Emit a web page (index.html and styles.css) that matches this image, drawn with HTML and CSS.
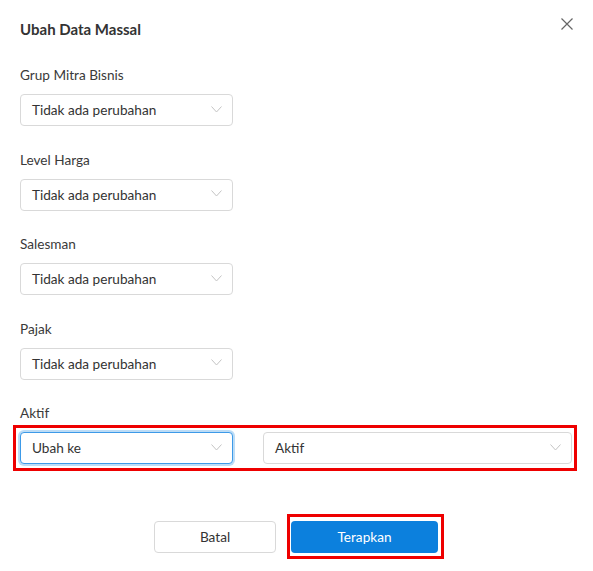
FILE: index.html
```html
<!DOCTYPE html>
<html>
<head>
<meta charset="utf-8">
<link rel="stylesheet" href="styles.css">
</head>
<body>
<div class="modal">
  <div class="header">
    <h1 class="title">Ubah Data Massal</h1>
    <button class="close" aria-label="Tutup">
      <svg width="12" height="12" viewBox="0 0 12 12"><path d="M0.5 0.5L11.5 11.5M11.5 0.5L0.5 11.5" stroke="#666" stroke-width="1.2" fill="none"/></svg>
    </button>
  </div>

  <div class="field">
    <div class="label">Grup Mitra Bisnis</div>
    <div class="select"><span>Tidak ada perubahan</span><svg class="chev" width="11" height="7" viewBox="0 0 11 7"><path d="M0.5 0.5L5.5 6L10.5 0.5" stroke="#c4c4c4" fill="none"/></svg></div>
  </div>
  <div class="field">
    <div class="label">Level Harga</div>
    <div class="select"><span>Tidak ada perubahan</span><svg class="chev" width="11" height="7" viewBox="0 0 11 7"><path d="M0.5 0.5L5.5 6L10.5 0.5" stroke="#c4c4c4" fill="none"/></svg></div>
  </div>
  <div class="field">
    <div class="label">Salesman</div>
    <div class="select"><span>Tidak ada perubahan</span><svg class="chev" width="11" height="7" viewBox="0 0 11 7"><path d="M0.5 0.5L5.5 6L10.5 0.5" stroke="#c4c4c4" fill="none"/></svg></div>
  </div>
  <div class="field">
    <div class="label">Pajak</div>
    <div class="select"><span>Tidak ada perubahan</span><svg class="chev" width="11" height="7" viewBox="0 0 11 7"><path d="M0.5 0.5L5.5 6L10.5 0.5" stroke="#c4c4c4" fill="none"/></svg></div>
  </div>
  <div class="field last">
    <div class="label">Aktif</div>
    <div class="highlight row">
      <div class="select focused"><span>Ubah ke</span><svg class="chev" width="11" height="7" viewBox="0 0 11 7"><path d="M0.5 0.5L5.5 6L10.5 0.5" stroke="#c4c4c4" fill="none"/></svg></div>
      <div class="select wide"><span>Aktif</span><svg class="chev" width="11" height="7" viewBox="0 0 11 7"><path d="M0.5 0.5L5.5 6L10.5 0.5" stroke="#c4c4c4" fill="none"/></svg></div>
    </div>
  </div>

  <div class="footer">
    <button class="btn btn-cancel">Batal</button>
    <div class="highlight btn-wrap">
      <button class="btn btn-primary">Terapkan</button>
    </div>
  </div>
</div>
</body>
</html>
```

FILE: styles.css
```css
* { box-sizing: border-box; }
html, body { margin: 0; padding: 0; background: #fff; }
body {
  font-family: Lato, "Liberation Sans", sans-serif;
  color: #333;
  font-size: 14px;
}
.modal {
  width: 593px;
  height: 571px;
  padding: 19px 20px 0 20px;
}
.header {
  display: flex;
  justify-content: space-between;
  align-items: flex-start;
  height: 46px;
}
.title {
  margin: 0;
  font-size: 15px;
  font-weight: 700;
  line-height: 20px;
  color: #333;
}
.close {
  border: none;
  background: none;
  padding: 0;
  margin: -1px 0 0 0;
  width: 12px;
  height: 12px;
  cursor: pointer;
  display: block;
}
.close svg { display: block; }
.field { margin-bottom: 23.5px; }
.field.last { margin-bottom: 0; }
.label {
  line-height: 20px;
  font-size: 13.6px;
  color: #3a3a3a;
  margin-bottom: 9px;
}
.field.last .label { margin-bottom: 2px; }
.select {
  width: 213px;
  height: 32px;
  border: 1px solid #d9d9d9;
  border-radius: 4px;
  display: flex;
  align-items: center;
  justify-content: space-between;
  padding: 0 10px 0 11px;
  font-size: 13.6px;
  color: #333;
  background: #fff;
}
.chev { display: block; margin-top: -2px; }
.select.focused {
  border-color: #3d9ae8;
  box-shadow: 0 0 0 2px #bcdcf6;
}
.select.wide { width: 309px; }
.highlight {
  border: 3px solid #ee0000;
}
.row {
  display: flex;
  gap: 30px;
  margin-left: -7px;
  width: 564px;
  padding: 4px 2px 4px 4px;
}
.footer {
  display: flex;
  justify-content: center;
  align-items: center;
  margin-top: 43px;
  padding-left: 5px;
}
.btn {
  height: 32px;
  border-radius: 4px;
  font-family: Lato, "Liberation Sans", sans-serif;
  font-size: 13.6px;
  cursor: pointer;
}
.btn-cancel {
  width: 122px;
  border: 1px solid #d9d9d9;
  background: #fff;
  color: #333;
  margin-right: 11px;
}
.btn-wrap {
  padding: 4px 3px 3px 1px;
}
.btn-primary {
  display: block;
  width: 147px;
  border: none;
  background: #0c80dd;
  color: #fff;
}
```
